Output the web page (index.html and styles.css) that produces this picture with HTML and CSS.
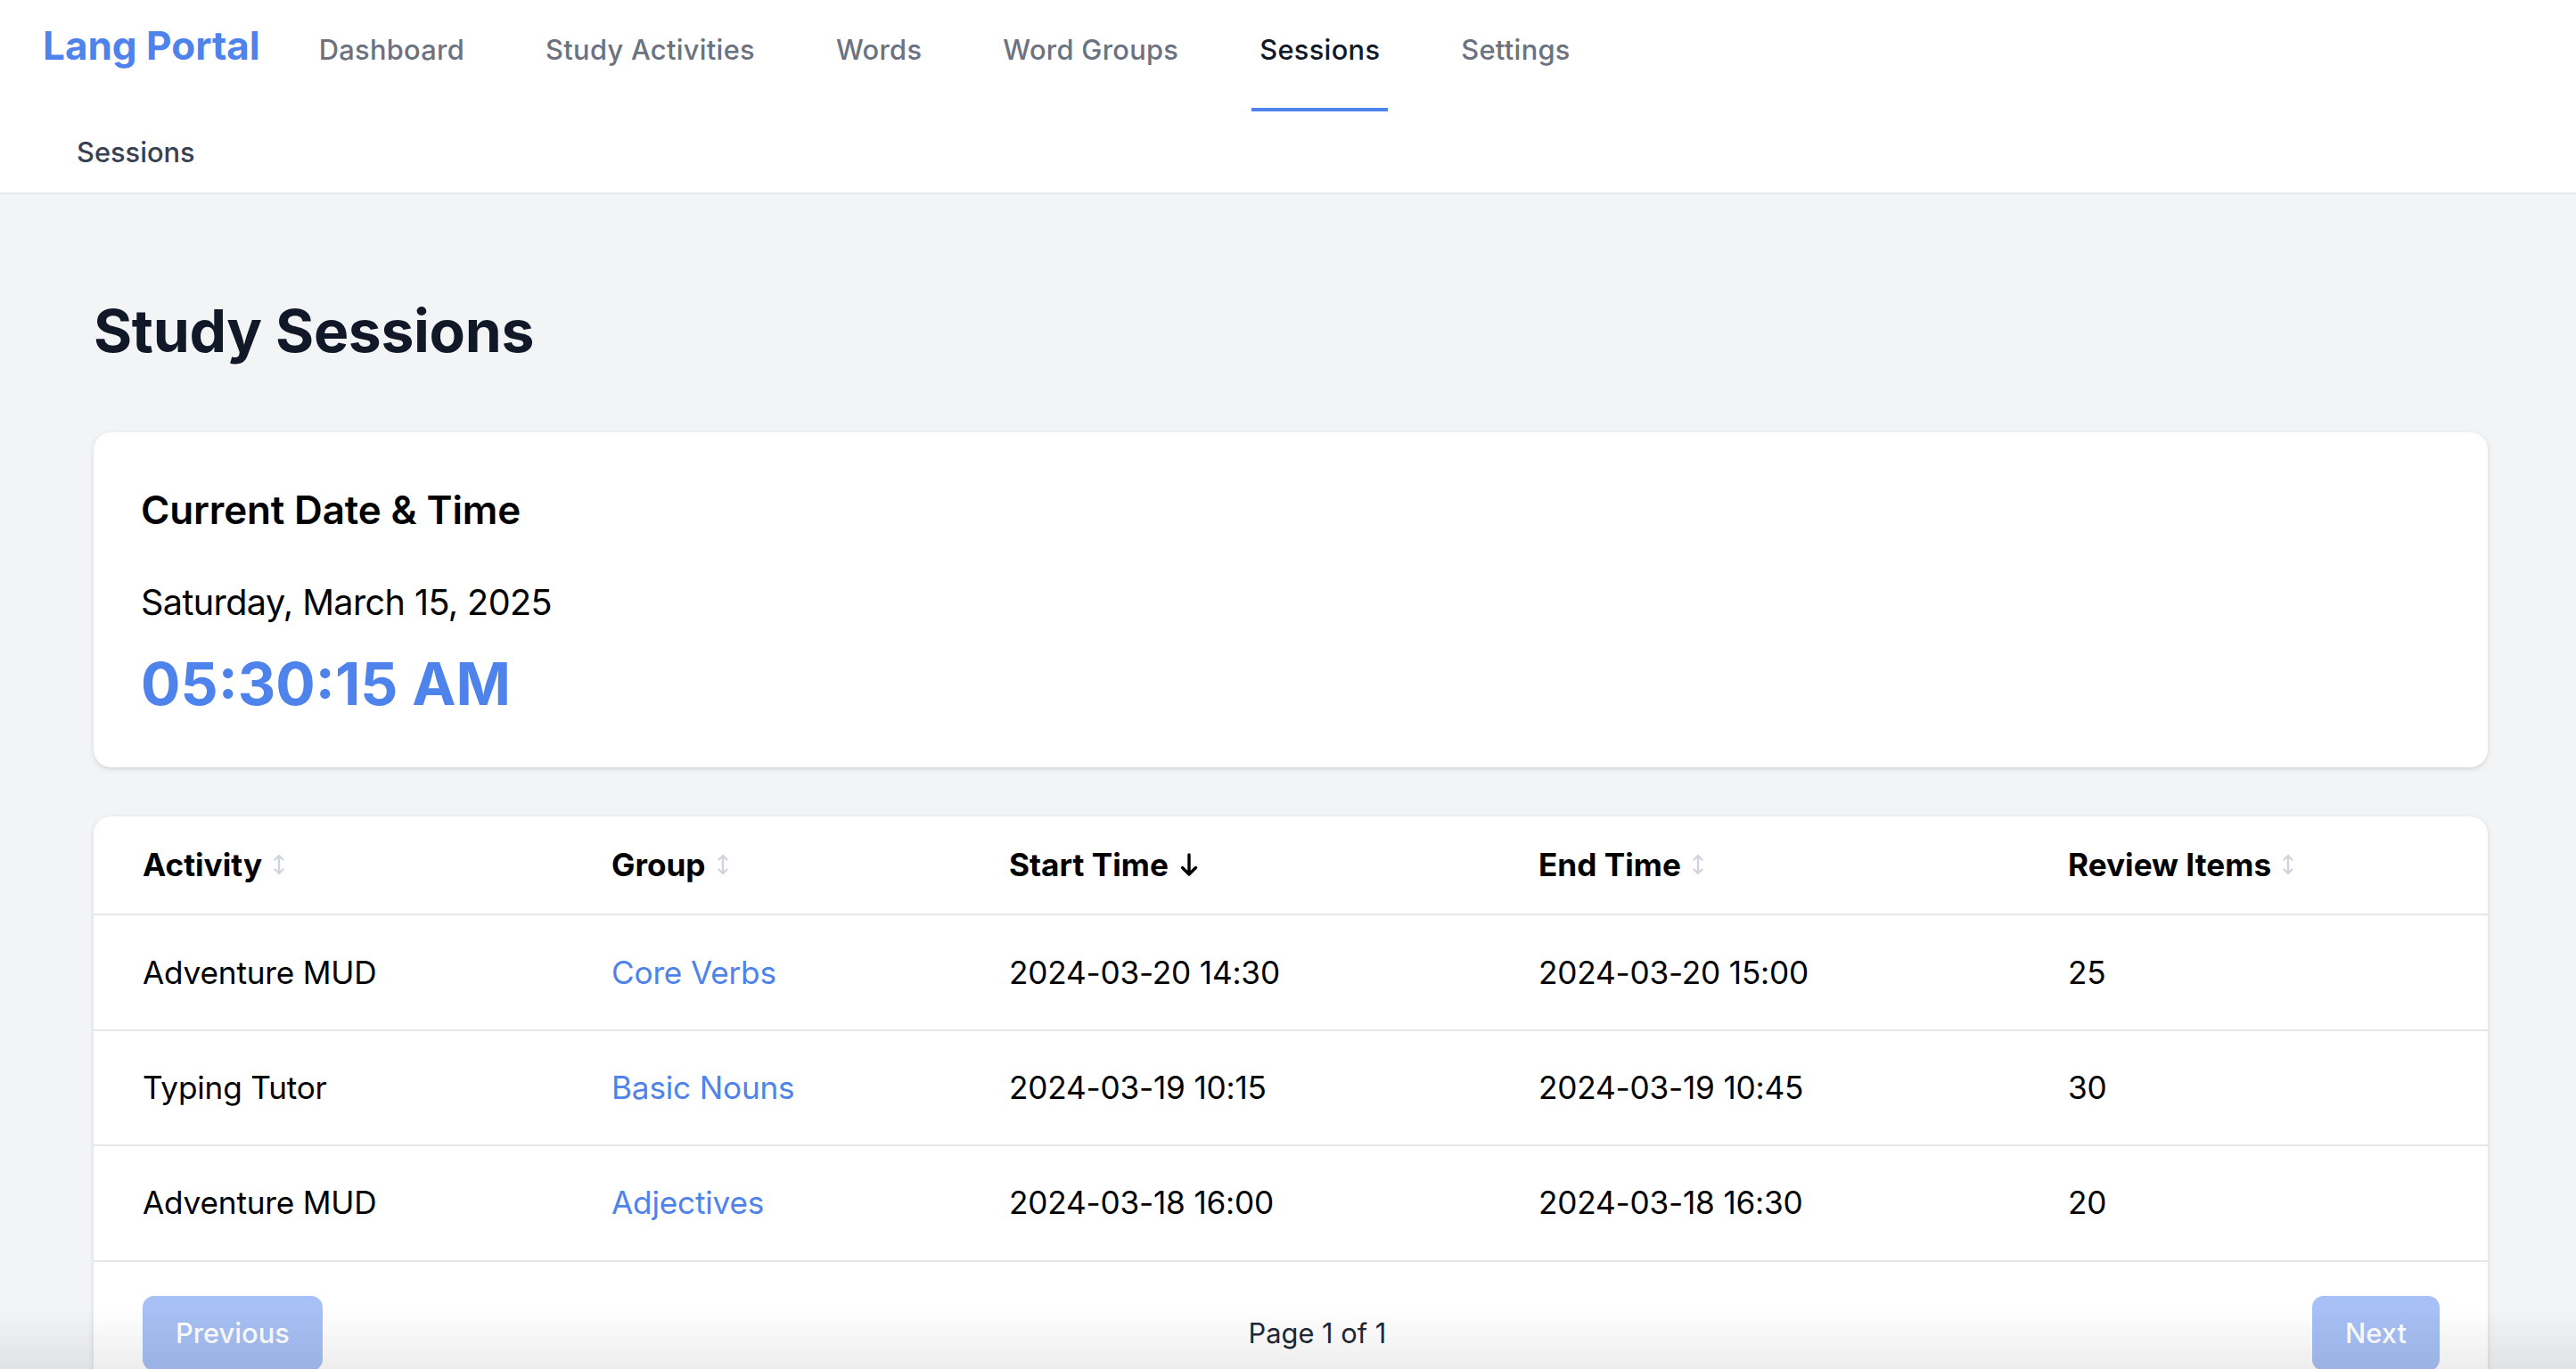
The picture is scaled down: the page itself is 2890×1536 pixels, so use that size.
FILE: index.html
```html
<!DOCTYPE html>
<html lang="en">
<head>
<meta charset="utf-8">
<title>Lang Portal - Sessions</title>
<link rel="stylesheet" href="styles.css">
</head>
<body>
<header class="topbar">
  <div class="nav-row">
    <a class="logo" href="#">Lang Portal</a>
    <nav class="nav-links">
      <a class="nav-link" href="#">Dashboard</a>
      <a class="nav-link" href="#">Study Activities</a>
      <a class="nav-link" href="#">Words</a>
      <a class="nav-link" href="#">Word Groups</a>
      <a class="nav-link active" href="#">Sessions</a>
      <a class="nav-link" href="#">Settings</a>
    </nav>
  </div>
  <div class="crumb-row"><span class="crumb">Sessions</span></div>
</header>

<main class="page">
  <h1 class="page-title">Study Sessions</h1>

  <section class="card clock-card">
    <h2 class="card-title">Current Date &amp; Time</h2>
    <p class="date">Saturday, March 15, 2025</p>
    <p class="time">05:30:15 AM</p>
  </section>

  <section class="card table-card">
    <table class="sessions">
      <colgroup>
        <col class="c-activity">
        <col class="c-group">
        <col class="c-start">
        <col class="c-end">
        <col class="c-review">
      </colgroup>
      <thead>
        <tr>
          <th><span class="th-inner">Activity <svg class="sort-icon" viewBox="0 0 14 26" width="14" height="26"><path d="M7 3V23M2.5 7.5L7 3L11.5 7.5M2.5 18.5L7 23L11.5 18.5"/></svg></span></th>
          <th><span class="th-inner">Group <svg class="sort-icon" viewBox="0 0 14 26" width="14" height="26"><path d="M7 3V23M2.5 7.5L7 3L11.5 7.5M2.5 18.5L7 23L11.5 18.5"/></svg></span></th>
          <th><span class="th-inner">Start Time <svg class="sort-active" viewBox="0 0 22 28" width="22" height="28"><path d="M11 3V25M3.5 17.5L11 25L18.5 17.5"/></svg></span></th>
          <th><span class="th-inner">End Time <svg class="sort-icon" viewBox="0 0 14 26" width="14" height="26"><path d="M7 3V23M2.5 7.5L7 3L11.5 7.5M2.5 18.5L7 23L11.5 18.5"/></svg></span></th>
          <th><span class="th-inner">Review Items <svg class="sort-icon" viewBox="0 0 14 26" width="14" height="26"><path d="M7 3V23M2.5 7.5L7 3L11.5 7.5M2.5 18.5L7 23L11.5 18.5"/></svg></span></th>
        </tr>
      </thead>
      <tbody>
        <tr>
          <td>Adventure MUD</td>
          <td><a class="group-link" href="#">Core Verbs</a></td>
          <td>2024-03-20 14:30</td>
          <td>2024-03-20 15:00</td>
          <td>25</td>
        </tr>
        <tr>
          <td>Typing Tutor</td>
          <td><a class="group-link" href="#">Basic Nouns</a></td>
          <td>2024-03-19 10:15</td>
          <td>2024-03-19 10:45</td>
          <td>30</td>
        </tr>
        <tr>
          <td>Adventure MUD</td>
          <td><a class="group-link" href="#">Adjectives</a></td>
          <td>2024-03-18 16:00</td>
          <td>2024-03-18 16:30</td>
          <td>20</td>
        </tr>
      </tbody>
    </table>
    <div class="pager">
      <button class="pager-btn" disabled>Previous</button>
      <span class="pager-info">Page 1 of 1</span>
      <button class="pager-btn" disabled>Next</button>
    </div>
  </section>
</main>
<div class="bottom-fade"></div>
</body>
</html>
```

FILE: styles.css
```css
html, body {
  margin: 0;
  padding: 0;
}

body {
  font-family: Inter, "Noto Sans", "Liberation Sans", sans-serif;
  background: #f3f4f6;
  color: #000;
  min-height: 100vh;
}

/* ---------- Top bar ---------- */
.topbar {
  background: #fff;
  border-bottom: 2px solid #e5e7eb;
  padding-bottom: 23px;
}

.nav-row {
  display: flex;
  align-items: baseline;
  padding-left: 48px;
}

.logo {
  font-size: 44px;
  line-height: 61.6px;
  font-weight: 700;
  color: #4f83ec;
  text-decoration: none;
}

.nav-links {
  display: flex;
  gap: 73px;
  margin-left: 57px;
}

.nav-link {
  display: block;
  font-size: 30.8px;
  line-height: 44px;
  font-weight: 500;
  letter-spacing: 0.3px;
  color: #6b7280;
  text-decoration: none;
  padding: 34px 9px 43px;
  border-bottom: 4.4px solid transparent;
}

.nav-link.active {
  color: #111827;
  border-bottom-color: #4f83ec;
}

.crumb-row {
  padding: 24px 0 0 86px;
}

.crumb {
  font-size: 30.8px;
  line-height: 44px;
  font-weight: 500;
  color: #374151;
}

/* ---------- Page ---------- */
.page {
  padding: 114px 99px 0 105px;
}

.page-title {
  margin: 0 0 74px;
  font-size: 66px;
  line-height: 79.2px;
  font-weight: 700;
  letter-spacing: -0.35px;
  color: #111827;
}

.card {
  background: #fff;
  border-radius: 20px;
  box-shadow: 0 2px 7px rgba(0, 0, 0, 0.1), 0 2px 4px -2px rgba(0, 0, 0, 0.1);
}

.clock-card {
  padding: 57px 53px 53px;
  margin-bottom: 55px;
}

.card-title {
  margin: 0;
  font-size: 44px;
  line-height: 61.6px;
  font-weight: 600;
  letter-spacing: -0.15px;
  color: #000;
}

.date {
  margin: 42px 0 0;
  font-size: 39.6px;
  line-height: 61.6px;
  letter-spacing: -0.6px;
  color: #000;
}

.time {
  margin: 21px 0 0;
  font-size: 66px;
  line-height: 79.2px;
  font-weight: 700;
  color: #4f83ec;
}

/* ---------- Table ---------- */
.table-card {
  overflow: hidden;
}

.sessions {
  width: 100%;
  border-collapse: collapse;
  table-layout: fixed;
}

.c-activity { width: 526px; }
.c-group { width: 446px; }
.c-start { width: 594px; }
.c-end { width: 594px; }

.sessions th {
  text-align: left;
  padding: 28.5px 20px 28.5px 55px;
  font-size: 35.2px;
  line-height: 52.8px;
  font-weight: 700;
  color: #000;
  border-bottom: 2px solid #e5e7eb;
}

.th-inner {
  display: inline-flex;
  align-items: center;
  gap: 12px;
}

.sort-icon {
  fill: none;
  stroke: #d1d5db;
  stroke-width: 2.4;
  stroke-linecap: round;
  stroke-linejoin: round;
}

.sort-active {
  fill: none;
  stroke: #000;
  stroke-width: 3.4;
  stroke-linecap: round;
  stroke-linejoin: round;
}

.sessions td {
  padding: 37.3px 20px 37.3px 55px;
  font-size: 35.2px;
  line-height: 52.8px;
  letter-spacing: -0.2px;
  color: #000;
  border-bottom: 2px solid #e5e7eb;
}

.group-link {
  color: #4f83ec;
  text-decoration: none;
}

/* ---------- Pager ---------- */
.pager {
  display: flex;
  justify-content: space-between;
  align-items: center;
  padding: 38px 54px 40px 55px;
}

.pager-btn {
  font-family: inherit;
  font-size: 30.8px;
  line-height: 44px;
  font-weight: 500;
  color: #fff;
  background: #a7c0f5;
  border: none;
  border-radius: 13px;
  padding: 20px 37px;
}

.pager-info {
  font-size: 30.8px;
  line-height: 44px;
  color: #1f2937;
}

.bottom-fade {
  position: fixed;
  left: 0;
  right: 0;
  bottom: 0;
  height: 70px;
  pointer-events: none;
  background: linear-gradient(to bottom, rgba(0, 0, 0, 0), rgba(0, 0, 0, 0.07));
}
```
